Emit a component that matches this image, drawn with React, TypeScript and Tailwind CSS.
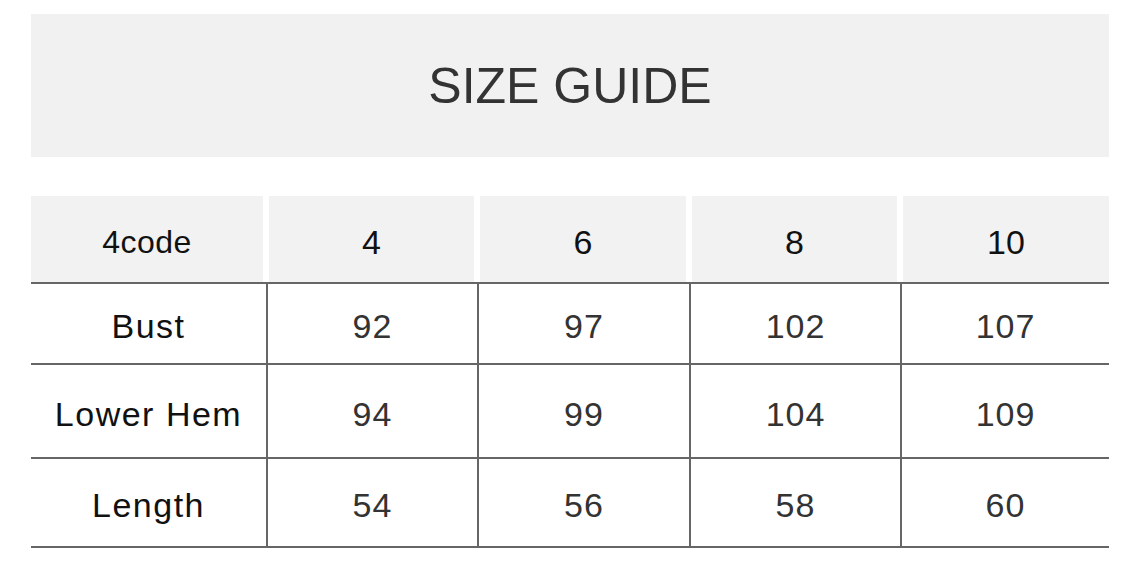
const cols = "grid grid-cols-[235px_211px_212px_211px_1fr]";

const header = ["4code", "4", "6", "8", "10"];

const rows = [
  { label: "Bust", values: ["92", "97", "102", "107"], h: "h-[79px]" },
  { label: "Lower Hem", values: ["94", "99", "104", "109"], h: "h-[92px]" },
  { label: "Length", values: ["54", "56", "58", "60"], h: "h-[87px]" },
];

export default function App() {
  return (
    <div className="min-h-screen w-full bg-white pt-[14px] pl-[31px] font-['Liberation_Sans',Arial,sans-serif]">
      <div className="w-[1078px]">
        <div className="flex h-[143px] items-center justify-center bg-[#f1f1f1]">
          <h1 className="pt-[2px] text-[50px] font-normal text-[#333333]">SIZE GUIDE</h1>
        </div>

        <div className="mt-[39px]">
          <div className={`${cols} h-[86px]`}>
            {header.map((h, i) => (
              <div
                key={h}
                className={`flex items-center justify-center bg-[#f2f2f2] pt-[6px] ${
                  i === 0 ? "mr-[3px]" : i === header.length - 1 ? "ml-[3px]" : "mx-[3px]"
                } ${i === 0 ? "text-[32px] tracking-[0.5px]" : "text-[34px]"} text-[#111111]`}
              >
                {h}
              </div>
            ))}
          </div>

          {rows.map((r) => (
            <div key={r.label} className={`${cols} border-t-2 border-[#666666]`}>
              <div className={`flex ${r.h} items-center justify-center pt-[6px] text-[34px] tracking-[1.5px] text-[#111111]`}>
                {r.label}
              </div>
              {r.values.map((v, i) => (
                <div
                  key={i}
                  className={`flex ${r.h} items-center justify-center border-l-2 border-[#666666] pt-[6px] text-[34px] tracking-[1px] text-[#333333]`}
                >
                  {v}
                </div>
              ))}
            </div>
          ))}
          <div className="h-[2px] bg-[#666666]" />
        </div>
      </div>
    </div>
  );
}
